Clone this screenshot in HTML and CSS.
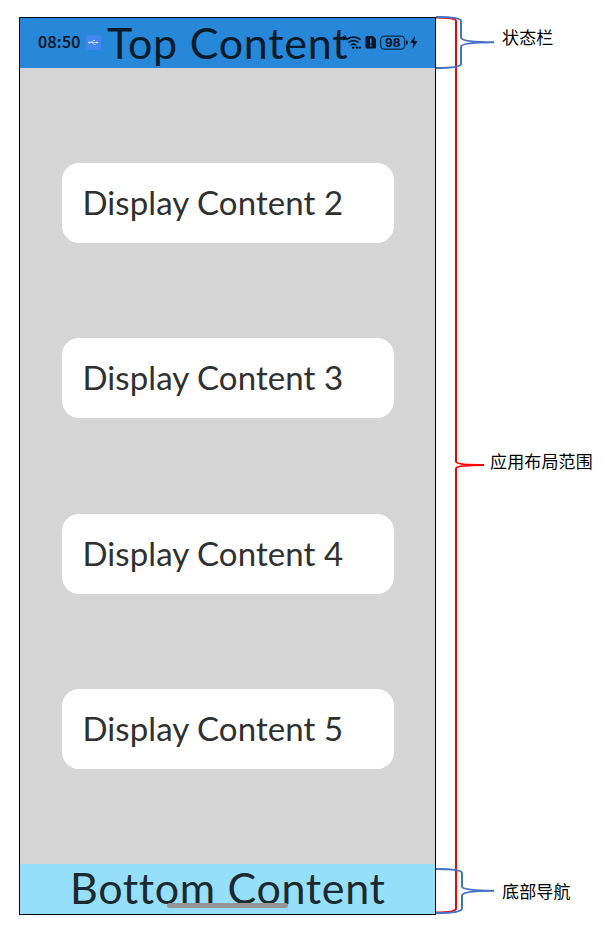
FILE: index.html
```html
<!DOCTYPE html>
<html lang="zh-CN">
<head>
<meta charset="UTF-8">
<title>应用布局范围</title>
<link rel="stylesheet" href="styles.css">
</head>
<body>
<main class="figure">
  <section class="phone">
    <header class="top">
      <h1 class="top-title">Top Content</h1>
      <div class="status">
        <span class="time">08:50</span>
        <svg class="usb" viewBox="0 0 15 15"><rect width="15" height="15" rx="3" fill="#4386ef"/><path d="M3 7.5h8M5 7.5l2-2h2M6 7.5l2 2h1.5" fill="none" stroke="#d5e5ff" stroke-width=".8"/><circle cx="3.4" cy="7.5" r="1.1" fill="#e4efff"/><path d="M10.5 6.2l2 1.3-2 1.3z" fill="#e4efff"/></svg>
        <svg class="signals" viewBox="0 0 78 20">
          <g fill="none" stroke="#061625" stroke-width="1.7" stroke-linecap="round"><path d="M5 6.300q6.500-4.300 13 0M7 9.200q4.500-3 9 0M9.200 11.900q2.300-1.500 4.600 0"/><path d="M1.200 3.500l1 2.500M3 2.500l.5 1.500" stroke-width="1.300"/></g>
          <circle cx="1.800" cy="5.500" r="1.300" fill="none" stroke="#061625"/>
          <g fill="#061625"><circle cx="11.200" cy="14.700" r="1.300"/><circle cx="15" cy="14.600" r="1.200"/><circle cx="17.900" cy="14.600" r="1.200"/><path d="M25 3h6l3 3v8.500q0 1-1 1h-8q-1.500 0-1.500-1.500v-9.500Q23.500 3 25 3z"/></g>
          <path d="M28.800 5.500v5M28.800 11.800v1.700" stroke="#2787d9" stroke-width="1.600"/>
          <rect x="38.700" y="3.200" width="24" height="13" rx="3.700" fill="none" stroke="#092a48" stroke-width="1.200"/>
          <path d="M64.700 7.800q1.500 1.700 0 3.600z" fill="#061625" stroke="#061625"/>
          <path d="M73 3l-5 7h3.200l-.8 6 5.200-8h-3.200z" fill="#061625"/>
          <text class="battery" x="50.700" y="14" text-anchor="middle">98</text>
        </svg>
      </div>
    </header>
    <div class="content">
      <div class="card">Display Content 2</div>
      <div class="card">Display Content 3</div>
      <div class="card">Display Content 4</div>
      <div class="card">Display Content 5</div>
    </div>
    <footer class="bottom">
      <div class="bottom-title">Bottom Content</div>
      <div class="handle"></div>
    </footer>
  </section>
  <aside class="labels">
    <span class="label label-side">状态栏</span>
    <span class="label label-middle">应用布局范围</span>
    <span class="label label-side">底部导航</span>
  </aside>
  <svg class="braces" viewBox="0 0 610 929">
    <path class="red" d="M436 17.500Q456 17.500 456 21V461.500Q456 465 484 465Q456 465 456 468.500V908.500Q456 912.500 436 912.500"/>
    <path class="blue" d="M436 17Q461 17 461 21V37.500Q461 42 494 42.300Q461 42.300 461 47V64Q461 68 436 68"/>
    <path class="blue" d="M436 869Q462 869 462 873V886.500Q462 890.500 494 890.800Q462 891 462 895.500V908.500Q462 913 436 913"/>
  </svg>
</main>
</body>
</html>
```
FILE: styles.css
```css
* { box-sizing: border-box; }
body { margin: 0; background: #fff; font-family: Lato, "Noto Sans CJK SC", sans-serif; }
.figure { position: relative; display: flex; width: 610px; height: 929px; padding: 17px 0 14px 19px; overflow: hidden; }
.phone { display: flex; flex-direction: column; width: 417px; height: 898px; border: 1px solid #000; background: #d5d5d5; }
.top { position: relative; height: 50px; flex: none; background: #2787d9; }
.top-title { margin: 0; padding-left: 87px; font-size: 43px; font-weight: 400; line-height: 50px; letter-spacing: .75px; color: #071b2b; white-space: nowrap; }
.status { position: absolute; inset: 0; display: flex; align-items: center; padding: 0 0 1px 18px; }
.time { width: 48px; font: 500 16px/18px "Noto Sans CJK SC", sans-serif; letter-spacing: .3px; padding-bottom: 3px; color: #061625; -webkit-text-stroke: .2px #061625; }
.usb { width: 15px; height: 15px; }
.signals { width: 78px; height: 20px; margin-left: 241px; }
.battery { font: 700 12px Inter, sans-serif; fill: #061625; }
.content { display: flex; flex: 1; flex-direction: column; align-items: center; justify-content: space-evenly; }
.card { width: 332px; height: 80px; padding-left: 21px; border-radius: 17px; background: #fff; color: #303030; font-size: 33px; line-height: 79px; letter-spacing: .08px; white-space: nowrap; }
.bottom { position: relative; height: 50px; flex: none; background: #96dffa; }
.bottom-title { padding-left: 50px; font-size: 43px; line-height: 48px; letter-spacing: .65px; color: #1c292e; white-space: nowrap; }
.handle { position: absolute; left: 147px; bottom: 6px; width: 121px; height: 5px; border-radius: 3px; background: #969696; }
.labels { display: flex; flex-direction: column; justify-content: space-between; padding: 7px 0 11px 54px; }
.label { font: 17px/26px "Noto Sans CJK SC", sans-serif; letter-spacing: .15px; color: #000; white-space: nowrap; }
.label-side { padding-left: 12px; }
.label-middle { padding-bottom: 6px; }
.braces { position: absolute; inset: 0; width: 610px; height: 929px; }
.red, .blue { fill: none; stroke-width: 2; }
.red { stroke: #f00; }
.blue { stroke: #4472c4; }
```
